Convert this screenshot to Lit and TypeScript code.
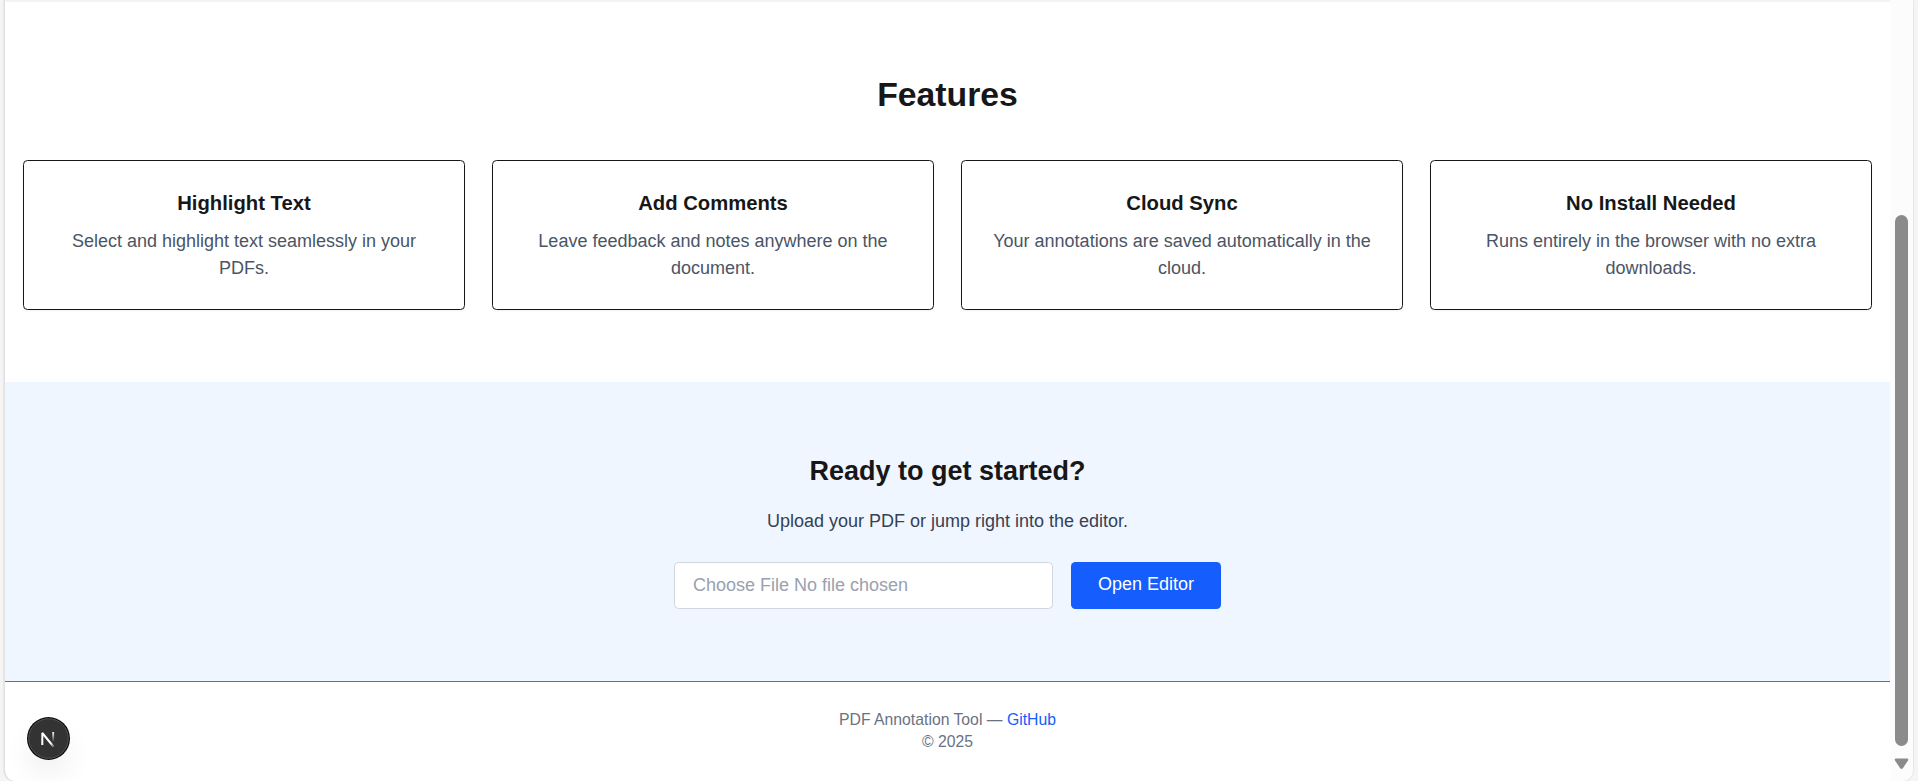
import { LitElement, html, css } from "lit";
import { customElement, property } from "lit/decorators.js";

const FEATURES = [
  { title: "Highlight Text", text: "Select and highlight text seamlessly in your PDFs." },
  { title: "Add Comments", text: "Leave feedback and notes anywhere on the document." },
  { title: "Cloud Sync", text: "Your annotations are saved automatically in the cloud." },
  { title: "No Install Needed", text: "Runs entirely in the browser with no extra downloads." },
];

@customElement("feature-card")
class FeatureCard extends LitElement {
  @property() heading = "";
  @property() text = "";

  static styles = css`
    :host {
      display: block;
      box-sizing: border-box;
      height: 150px;
      padding: 27px;
      border: 1px solid #171717;
      border-radius: 4.5px;
      box-shadow: 0 1px 2px rgba(0, 0, 0, 0.06);
      text-align: center;
    }
    .title {
      margin: 0 0 10px;
      font-size: 20.25px;
      line-height: 30px;
      font-weight: 700;
    }
    .text {
      margin: 0;
      color: #4a5565;
      line-height: 27px;
    }
  `;

  render() {
    return html`<h3 class="title">${this.heading}</h3>
      <p class="text">${this.text}</p>`;
  }
}

@customElement("app-root")
class AppRoot extends LitElement {
  static styles = css`
    :host {
      display: block;
      box-sizing: border-box;
      height: 781px;
      padding: 0 5px 0 4px;
      overflow: hidden;
      background: #f5f5f5;
      color: #171717;
      font-family: "Liberation Sans", Arial, sans-serif;
      font-size: 18px;
      line-height: 27px;
    }
    .window {
      position: relative;
      box-sizing: border-box;
      display: flex;
      height: 781px;
      border: 1px solid #e2e2e2;
      border-width: 0 0 0 1px;
      border-radius: 0 0 11px 11px;
      overflow: hidden;
      background: #fff;
      box-shadow: 0 0 2px rgba(0, 0, 0, 0.2);
    }
    .page {
      flex: 1;
      min-width: 0;
      text-align: center;
    }
    .edge {
      height: 2px;
      background: #f3f3f4;
    }
    .features {
      padding: 72px 18px;
    }
    .h2 {
      margin: 0 0 46px;
      font-size: 33.75px;
      line-height: 40px;
      font-weight: 700;
    }
    .grid {
      display: grid;
      grid-template-columns: repeat(4, 1fr);
      gap: 27px;
    }
    .cta {
      padding: 72px 18px;
      background: #eff6ff;
    }
    .ready {
      margin: 0 0 20px;
      font-size: 27px;
      line-height: 34px;
      font-weight: 700;
    }
    .lead {
      margin: 0 0 27px;
      color: #364153;
    }
    .row {
      display: flex;
      justify-content: center;
      gap: 18px;
    }
    .file {
      box-sizing: border-box;
      width: 379px;
      height: 47px;
      padding: 9px 18px;
      border: 1px solid #d1d5dc;
      border-radius: 4.5px;
      background: #fff;
      color: #99a1af;
      text-align: left;
    }
    .open {
      box-sizing: border-box;
      width: 150px;
      height: 47px;
      padding: 9px 0 11px;
      border: 0;
      border-radius: 4.5px;
      background: #155dfc;
      color: #fff;
      font: inherit;
    }
    .footer {
      padding: 27px 18px 0;
      border-top: 1px solid #6a7282;
      color: #6a7282;
      font-size: 15.75px;
      line-height: 21px;
    }
    .footer p {
      margin: 0 0 1px;
    }
    .link {
      color: #155dfc;
      text-decoration: none;
    }
    .scroll {
      box-sizing: border-box;
      flex: none;
      width: 23px;
      padding: 215px 5px 0;
      background: #fcfcfc;
    }
    .thumb {
      height: 531px;
      border-radius: 7px;
      background: #8b8b8b;
    }
    .arrow {
      display: block;
      margin: 12px 0 0 -1px;
    }
    .badge {
      position: absolute;
      left: 22px;
      top: 717px;
      width: 43px;
      height: 43px;
      border-radius: 50%;
      box-shadow: 0 16px 32px -8px rgba(0, 0, 0, 0.14);
    }
    .badge svg {
      display: block;
    }
  `;

  render() {
    return html`
      <div class="window">
        <main class="page">
          <div class="edge"></div>
          <section class="features">
            <h2 class="h2">Features</h2>
            <div class="grid">
              ${FEATURES.map((f) => html`<feature-card .heading=${f.title} .text=${f.text}></feature-card>`)}
            </div>
          </section>
          <section class="cta">
            <h2 class="ready">Ready to get started?</h2>
            <p class="lead">Upload your PDF or jump right into the editor.</p>
            <div class="row">
              <div class="file">Choose File No file chosen</div>
              <button class="open">Open Editor</button>
            </div>
          </section>
          <footer class="footer">
            <p>PDF Annotation Tool — <a class="link" href="#">GitHub</a></p>
            <p>© 2025</p>
          </footer>
        </main>
        <div class="scroll">
          <div class="thumb"></div>
          <svg class="arrow" width="15" height="12" viewBox="0 0 15 12">
            <path d="M2 .5h11q2 0 1 2l-5 7.500q-1.500 2-3 0l-5-7.500q-1-2 1-2z" fill="#8b8b8b" />
          </svg>
        </div>
        <div class="badge">
          <svg width="43" height="43" viewBox="0 0 43 43" fill="none">
            <defs>
              <linearGradient id="diag" x1="20" y1="22" x2="27" y2="31" gradientUnits="userSpaceOnUse">
                <stop stop-color="#fff" />
                <stop offset="0.5" stop-color="#fff" />
                <stop offset="1" stop-color="#fff" stop-opacity="0" />
              </linearGradient>
              <linearGradient id="stem" x1="26" y1="15" x2="26" y2="25" gradientUnits="userSpaceOnUse">
                <stop stop-color="#fff" />
                <stop offset="1" stop-color="#fff" stop-opacity="0" />
              </linearGradient>
            </defs>
            <circle cx="21.500" cy="21.500" r="21.500" fill="#0c0c0c" />
            <circle cx="21.500" cy="21.500" r="19.800" fill="#333" stroke="#555" />
            <path d="M15.300 28V16L26.800 30" stroke="url(#diag)" stroke-width="2" stroke-linejoin="bevel" />
            <path d="M26.200 15v10" stroke="url(#stem)" stroke-width="1.800" />
          </svg>
        </div>
      </div>
    `;
  }
}
